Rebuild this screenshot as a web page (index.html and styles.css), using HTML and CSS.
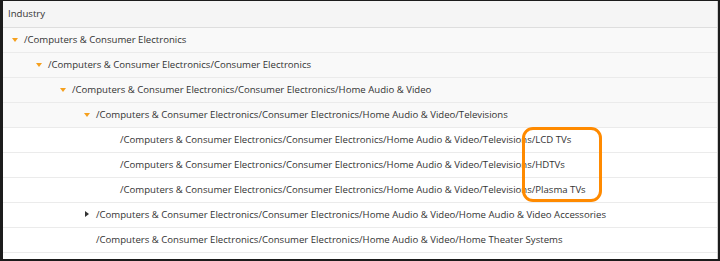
FILE: index.html
```html
<!DOCTYPE html>
<html>

<head>
    <meta charset="utf-8"/>
    <title>Industry</title>
    <link rel="stylesheet" href="styles.css">
</head>

<body>
<div class="frame">
    <div class="grid">
        <div class="header">Industry</div>

        <div class="row open level-1">
            <span class="toggle"><span class="caret down"></span></span>
            <span class="label">/Computers &amp; Consumer Electronics</span>
        </div>
        <div class="row open level-2">
            <span class="toggle"><span class="caret down"></span></span>
            <span class="label">/Computers &amp; Consumer Electronics/Consumer Electronics</span>
        </div>
        <div class="row open level-3">
            <span class="toggle"><span class="caret down"></span></span>
            <span class="label">/Computers &amp; Consumer Electronics/Consumer Electronics/Home Audio &amp; Video</span>
        </div>
        <div class="row open level-4">
            <span class="toggle"><span class="caret down"></span></span>
            <span class="label">/Computers &amp; Consumer Electronics/Consumer Electronics/Home Audio &amp; Video/Televisions</span>
        </div>
        <div class="row level-5">
            <span class="toggle"></span>
            <span class="label">/Computers &amp; Consumer Electronics/Consumer Electronics/Home Audio &amp; Video/Televisions/LCD TVs</span>
        </div>
        <div class="row level-5">
            <span class="toggle"></span>
            <span class="label">/Computers &amp; Consumer Electronics/Consumer Electronics/Home Audio &amp; Video/Televisions/HDTVs</span>
        </div>
        <div class="row level-5">
            <span class="toggle"></span>
            <span class="label">/Computers &amp; Consumer Electronics/Consumer Electronics/Home Audio &amp; Video/Televisions/Plasma TVs</span>
        </div>
        <div class="row level-4">
            <span class="toggle"><span class="caret right"></span></span>
            <span class="label">/Computers &amp; Consumer Electronics/Consumer Electronics/Home Audio &amp; Video/Home Audio &amp; Video Accessories</span>
        </div>
        <div class="row level-4">
            <span class="toggle"></span>
            <span class="label">/Computers &amp; Consumer Electronics/Consumer Electronics/Home Audio &amp; Video/Home Theater Systems</span>
        </div>
    </div>

    <!-- highlight drawn over the leaf names -->
    <div class="highlight"></div>
</div>
</body>

</html>
```

FILE: styles.css
```css
body {
    margin: 0;
    font-family: "Open Sans", "DejaVu Sans", sans-serif;
    font-size: 9.6px;
    color: #333;
    background: #fff;
}

.frame {
    position: relative;
    width: 720px;
    height: 261px;
    box-sizing: border-box;
    border: 2px solid #1c1c1c;
    border-left-width: 3px;
    border-top-width: 1px;
    overflow: hidden;
}

.grid {
    height: 100%;
    border-right: 1px solid #cfcfcf;
    box-sizing: border-box;
}

.header {
    height: 26px;
    line-height: 26px;
    padding-left: 5px;
    background: #f5f5f5;
    border-bottom: 1px solid #dedede;
}

.row {
    display: flex;
    align-items: center;
    height: 24px;
    border-bottom: 1px solid #ebebeb;
    white-space: nowrap;
}

.row.open {
    background: #f9f9f9;
}

.label {
    margin-top: -2px;
}

.level-1 { padding-left: 5px; }
.level-2 { padding-left: 29px; }
.level-3 { padding-left: 53px; }
.level-4 { padding-left: 77px; }
.level-5 { padding-left: 101px; }

.toggle {
    display: flex;
    align-items: center;
    width: 16px;
    height: 100%;
    flex-shrink: 0;
}

.caret {
    margin-left: 4px;
    width: 0;
    height: 0;
}

.caret.down {
    border-left: 3px solid transparent;
    border-right: 3px solid transparent;
    border-top: 4px solid #f5a01e;
    margin-top: -1px;
}

.caret.right {
    margin-left: 5px;
    margin-top: -2px;
    border-top: 3px solid transparent;
    border-bottom: 3px solid transparent;
    border-left: 4px solid #333;
}

.highlight {
    position: absolute;
    left: 519px;
    top: 126px;
    width: 74px;
    height: 69px;
    border: 3px solid #ff8a00;
    border-radius: 11px;
}
```
